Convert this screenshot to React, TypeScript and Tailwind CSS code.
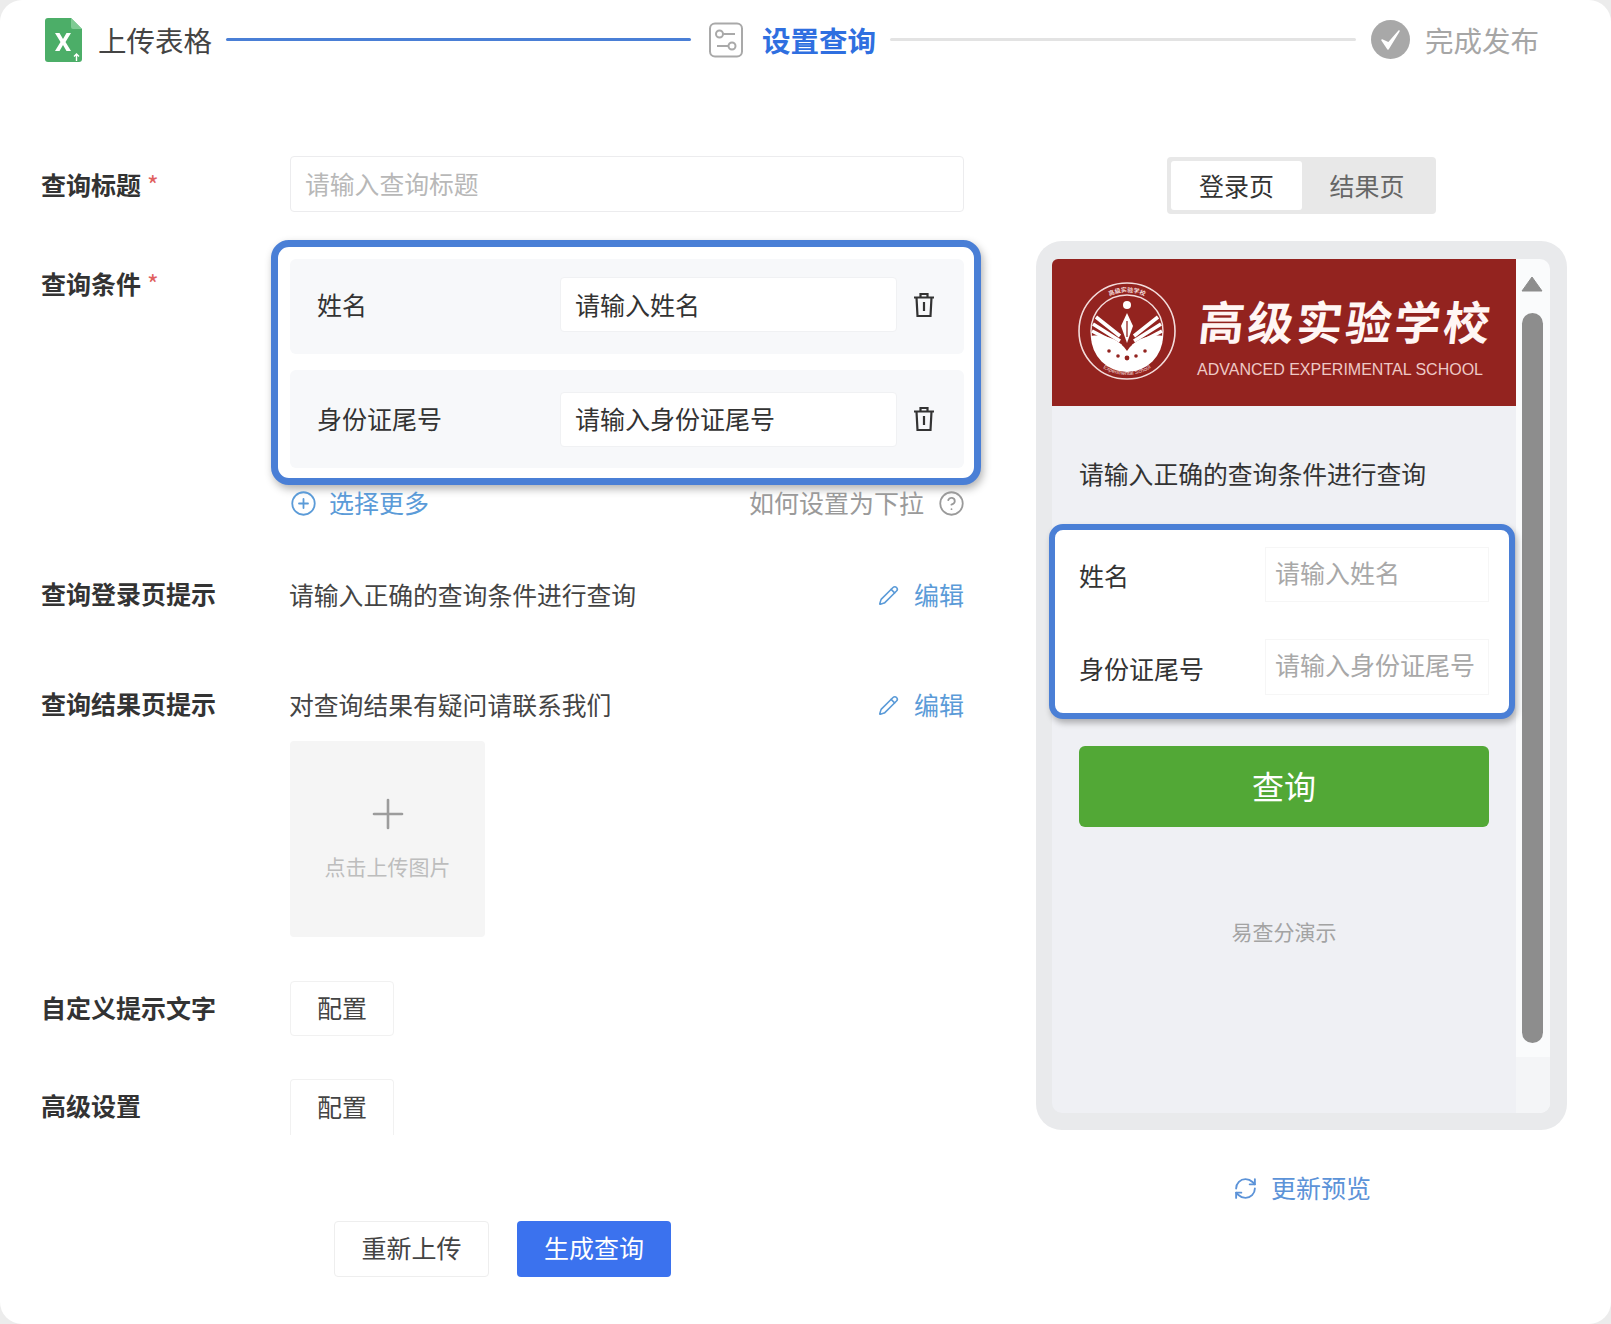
import React from "react";
import { CirclePlus, CircleHelp, Pencil, RefreshCw, Plus } from "lucide-react";

const font = { fontFamily: '"Noto Sans CJK SC", "Liberation Sans", sans-serif' };

function ExcelIcon() {
  return (
    <svg width="37" height="44" viewBox="0 0 37 44" className="shrink-0">
      <path d="M3 0H26L37 11V41a3 3 0 0 1-3 3H3a3 3 0 0 1-3-3V3a3 3 0 0 1 3-3Z" fill="#4cae68" />
      <path d="M26 0L37 11H28a2 2 0 0 1-2-2Z" fill="#7fcb94" />
      <path d="M10 15L14.5 15L18 21L21.5 15L26 15L20.5 24L26 33L21.5 33L18 27L14.5 33L10 33L15.5 24Z" fill="#fff" />
      <path d="M31.5 43V36M29 38.5L31.5 36L34 38.5" stroke="#fff" strokeWidth="1.4" fill="none" />
    </svg>
  );
}

function SettingsIcon() {
  return (
    <svg width="36" height="36" viewBox="0 0 36 36" fill="none" stroke="#a9a9a9" strokeWidth="2" className="shrink-0">
      <rect x="2" y="1.5" width="32" height="33" rx="5" />
      <circle cx="11.5" cy="12" r="3.5" />
      <path d="M15 12H27" />
      <circle cx="24" cy="24" r="3.5" />
      <path d="M9 24H20.5" />
    </svg>
  );
}

function CheckIcon() {
  return (
    <svg width="39" height="39" viewBox="0 0 39 39" className="shrink-0">
      <circle cx="19.5" cy="19.5" r="19.5" fill="#a8a8a8" />
      <path d="M11 20L17 29L28 11L17.5 23Z" fill="#fff" stroke="#fff" strokeWidth="1.5" strokeLinejoin="round" />
    </svg>
  );
}

function TrashIcon() {
  return (
    <svg width="24" height="26" viewBox="0 0 24 26" fill="none" stroke="#333" strokeWidth="2.2" className="shrink-0">
      <path d="M2 5.5H22M8.5 5.5V2H15.5V5.5M4.5 5.5L5.5 24H18.5L19.5 5.5M12 10V19" />
    </svg>
  );
}

function Emblem() {
  return (
    <svg width="100" height="100" viewBox="0 0 100 100" className="shrink-0">
      <defs>
        <path id="emblem-top" d="M11 50A39 39 0 0 1 89 50" />
        <path id="emblem-bottom" d="M6 50A44 44 0 0 0 94 50" />
      </defs>
      <circle cx="50" cy="50" r="48" fill="none" stroke="#f3dcdb" strokeWidth="1.6" />
      <circle cx="50" cy="50" r="36" fill="none" stroke="#f3dcdb" strokeWidth="1.4" />
      <text fontSize="6" fill="#f3dcdb" fontWeight="700">
        <textPath href="#emblem-top" startOffset="50%" textAnchor="middle">
          高级实验学校
        </textPath>
      </text>
      <text fontSize="5.5" fill="#f3dcdb" fontFamily="Liberation Sans">
        <textPath href="#emblem-bottom" startOffset="50%" textAnchor="middle">
          Experimental School
        </textPath>
      </text>
      <path d="M14 55C28 53 42 58 50 70C58 58 72 53 86 55A36 36 0 0 1 14 55Z" fill="#fff" />
      <path d="M19 36L43 55M16 43L43 60M15 50L44 65M81 36L57 55M84 43L57 60M85 50L56 65" stroke="#fff" strokeWidth="3.6" fill="none" />
      <path d="M50 32L56 45L50 62L44 45Z" fill="#fff" />
      <path d="M50 40V56" stroke="#93231f" strokeWidth="1.3" />
      <circle cx="50" cy="24" r="4" fill="#fff" />
      <circle cx="32" cy="70" r="1.8" fill="#93231f" />
      <circle cx="41" cy="75" r="1.8" fill="#93231f" />
      <circle cx="50" cy="77" r="2.4" fill="#93231f" />
      <circle cx="59" cy="75" r="1.8" fill="#93231f" />
      <circle cx="68" cy="70" r="1.8" fill="#93231f" />
    </svg>
  );
}

function Label({ children, star, className = "" }: { children: React.ReactNode; star?: boolean; className?: string }) {
  return (
    <div className={`w-[249px] shrink-0 text-[25px] leading-[28px] font-bold text-[#333] ${className}`}>
      {children}
      {star && <span className="ml-[6px] text-[#e0605f] font-normal">*</span>}
    </div>
  );
}

function ConditionRow({ name, value, className }: { name: string; value: string; className: string }) {
  return (
    <div className={`rounded-[6px] bg-[#f7f8fa] flex items-center pl-[27px] ${className}`}>
      <div className="w-[243px] shrink-0 text-[25px] text-[#333]">{name}</div>
      <div className="w-[337px] h-[55px] shrink-0 rounded-[4px] bg-white border border-[#f0f1f3] flex items-center pl-[14px] text-[25px] text-[#333]">
        {value}
      </div>
      <div className="ml-[15px]">
        <TrashIcon />
      </div>
    </div>
  );
}

function PromptRow({ label, text, className }: { label: string; text: string; className: string }) {
  return (
    <div className={`flex items-center h-[28px] ${className}`}>
      <Label className="-mt-[5px]">{label}</Label>
      <div className="w-[589px] -ml-px text-[24.8px] text-[#444] whitespace-nowrap">{text}</div>
      <Pencil size={21} strokeWidth={1.8} className="text-[#5b9bd8] shrink-0" />
      <div className="ml-[15px] text-[25px] text-[#5b9bd8] whitespace-nowrap">编辑</div>
    </div>
  );
}

export default function App() {
  return (
    <div style={font} className="w-[1611px] h-[1324px] bg-[#ececec] overflow-hidden">
      <div className="w-full h-full bg-white rounded-[22px]">
        {/* Steps */}
        <div className="flex pl-[45px] pt-[18px] h-[156px] items-start">
          <ExcelIcon />
          <div className="ml-[16px] w-[113px] text-[28.5px] leading-[43px] text-[#444] whitespace-nowrap">上传表格</div>
          <div className="ml-[15px] w-[465px] h-[3px] mt-[20px] bg-[#4a7fd6] rounded-full" />
          <div className="ml-[17px] mt-[4px]">
            <SettingsIcon />
          </div>
          <div className="ml-[18px] w-[113px] text-[28.5px] leading-[43px] font-bold text-[#2f6fe0] whitespace-nowrap">设置查询</div>
          <div className="ml-[15px] w-[466px] h-[3px] mt-[20px] bg-[#e3e3e3] rounded-full" />
          <div className="ml-[15px] mt-[2px]">
            <CheckIcon />
          </div>
          <div className="ml-[15px] w-[114px] text-[28.5px] leading-[43px] text-[#a6a6a6] whitespace-nowrap">完成发布</div>
        </div>

        <div className="flex">
          {/* Form */}
          <div className="w-[1036px] shrink-0 pl-[41px]">
            <div className="flex items-center">
              <Label star>查询标题</Label>
              <div className="w-[674px] h-[56px] rounded-[4px] border border-[#ececee] flex items-center pl-[14px] text-[24.8px] text-[#b8b8b8]">
                请输入查询标题
              </div>
            </div>

            <div className="flex mt-[28px]">
              <div className="pt-[29px]">
                <Label star>查询条件</Label>
              </div>
              <div className="-ml-[19px] w-[710px] h-[245px] rounded-[18px] border-[7px] border-[#4a7fd6] bg-white shadow-[2px_4px_8px_rgba(0,0,0,0.3)] pt-[12px] pl-[12px] pr-[10px] flex flex-col gap-[16px]">
                <ConditionRow name="姓名" value="请输入姓名" className="h-[95px] pb-[4px]" />
                <ConditionRow name="身份证尾号" value="请输入身份证尾号" className="h-[98px]" />
              </div>
            </div>

            <div className="flex items-center ml-[249px] w-[675px] h-[26px] mt-[5px] text-[25px]">
              <CirclePlus size={27} strokeWidth={1.6} className="text-[#5b9bd8] shrink-0" />
              <div className="ml-[12px] text-[#5b9bd8] whitespace-nowrap">选择更多</div>
              <div className="ml-auto text-[#9a9a9a] whitespace-nowrap">如何设置为下拉</div>
              <CircleHelp size={27} strokeWidth={1.6} className="ml-[14px] text-[#9a9a9a] shrink-0" />
            </div>

            <PromptRow className="mt-[65px]" label="查询登录页提示" text="请输入正确的查询条件进行查询" />
            <PromptRow className="mt-[82px]" label="查询结果页提示" text="对查询结果有疑问请联系我们" />

            <div className="ml-[249px] mt-[22px] w-[195px] h-[196px] rounded-[4px] bg-[#f5f5f5] flex flex-col items-center pt-[49px]">
              <Plus size={48} strokeWidth={1.3} className="text-[#9c9c9c]" />
              <div className="mt-[13px] text-[21px] leading-[30px] text-[#bdbdbd] whitespace-nowrap">点击上传图片</div>
            </div>

            <div className="flex items-center mt-[44px]">
              <Label className="-mt-[4px]">自定义提示文字</Label>
              <div className="w-[104px] h-[55px] rounded-[4px] border border-[#f1f1f1] flex items-center justify-center pb-[2px] text-[25px] text-[#444]">
                配置
              </div>
            </div>
            <div className="flex items-center mt-[43px]">
              <Label className="-mt-[4px]">高级设置</Label>
              <div className="w-[104px] h-[56px] rounded-t-[4px] border border-b-0 border-[#f1f1f1] flex items-center justify-center pb-[2px] text-[25px] text-[#444]">
                配置
              </div>
            </div>

            <div className="flex ml-[293px] mt-[86px] gap-[28px]">
              <div className="w-[155px] h-[56px] rounded-[4px] border border-[#eeeeee] flex items-center justify-center pb-[2px] text-[25px] text-[#444]">
                重新上传
              </div>
              <div className="w-[154px] h-[56px] rounded-[4px] bg-[#3b72ee] flex items-center justify-center pb-[2px] text-[25px] text-white">
                生成查询
              </div>
            </div>
          </div>

          {/* Preview */}
          <div className="w-[531px] shrink-0">
            <div className="ml-[131px] mt-px w-[269px] h-[57px] rounded-[4px] bg-[#e8e8e8] flex p-[4px] text-[25px]">
              <div className="w-[131px] rounded-[3px] bg-white flex items-center justify-center text-[#333]">登录页</div>
              <div className="flex-1 flex items-center justify-center text-[#666]">结果页</div>
            </div>

            <div className="mt-[27px] h-[889px] rounded-[26px] bg-[#e9eaec] pl-[16px] pr-[17px] pt-[18px] pb-[17px]">
              <div className="flex h-full">
                <div className="w-[464px] shrink-0 bg-[#eff0f4] rounded-l-[10px]">
                  <div className="h-[147px] bg-[#93231f] rounded-tl-[6px] flex items-center pl-[25px] pb-[3px]">
                    <Emblem />
                    <div className="ml-[22px] mt-[10px]">
                      <div className="text-[46px] leading-[58px] font-bold tracking-[3px] text-[#fff6f4] whitespace-nowrap -skew-x-6">高级实验学校</div>
                      <div style={{ fontFamily: '"Liberation Sans", sans-serif' }} className="-ml-[2px] mt-[10px] text-[16px] leading-[22px] text-[#eec9c6] whitespace-nowrap">
                        ADVANCED EXPERIMENTAL SCHOOL
                      </div>
                    </div>
                  </div>
                  <div className="mt-[52px] pl-[27px] text-[24.8px] leading-[30px] text-[#333] whitespace-nowrap">请输入正确的查询条件进行查询</div>
                  <div className="-ml-[3px] mt-[36px] w-[466px] h-[195px] rounded-[14px] border-[6px] border-[#4a7fd6] bg-white shadow-[2px_4px_6px_rgba(0,0,0,0.28)] pt-[17px] pl-[24px] relative">
                    <div className="flex items-center h-[55px]">
                      <div className="w-[186px] pt-[3px] text-[25px] text-[#333]">姓名</div>
                      <div className="w-[224px] h-full border border-[#f6f6f6] flex items-center pl-[9px] pb-[4px] text-[25px] text-[#a8a8a8]">请输入姓名</div>
                    </div>
                    <div className="flex items-center h-[56px] mt-[37px]">
                      <div className="w-[186px] pt-[3px] text-[25px] text-[#333] whitespace-nowrap">身份证尾号</div>
                      <div className="w-[224px] h-full border border-[#f6f6f6] flex items-center pl-[9px] pb-[4px] text-[25px] text-[#a8a8a8] whitespace-nowrap">请输入身份证尾号</div>
                    </div>
                  </div>
                  <div className="ml-[27px] mt-[27px] w-[410px] h-[81px] rounded-[6px] bg-[#52a836] flex items-center justify-center pb-[4px] text-[32px] text-white">查询</div>
                  <div className="mt-[89px] text-center text-[21px] leading-[30px] text-[#a3a3a3]">易查分演示</div>
                </div>
                <div className="flex-1 bg-[#fafbfc] rounded-r-[10px] flex flex-col items-center">
                  <svg width="22" height="16" viewBox="0 0 22 16" className="mt-[17px] -ml-[2px] shrink-0">
                    <path d="M11 1L21 15H1Z" fill="#8d8d8d" stroke="#8d8d8d" strokeLinejoin="round" />
                  </svg>
                  <div className="-ml-[2px] mt-[21px] w-[21px] h-[730px] rounded-full bg-[#8d8d8d]" />
                  <div className="mt-auto w-full h-[56px] rounded-br-[10px] bg-[#f4f5f7]" />
                </div>
              </div>
            </div>

            <div className="mt-[44px] ml-[197px] h-[28px] flex items-center">
              <RefreshCw size={25} strokeWidth={1.8} className="text-[#5c93d8] shrink-0" />
              <div className="ml-[13px] text-[25px] text-[#5c93d8] whitespace-nowrap">更新预览</div>
            </div>
          </div>
        </div>
      </div>
    </div>
  );
}
